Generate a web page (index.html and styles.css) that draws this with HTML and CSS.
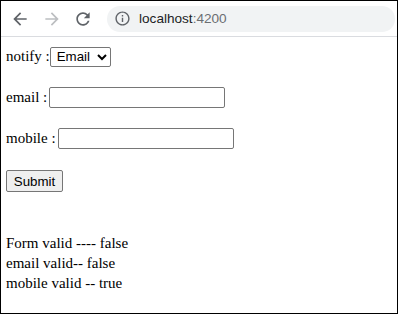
FILE: index.html
```html
<!DOCTYPE html>
<html>
<head>
<meta charset="utf-8">
<link rel="stylesheet" href="styles.css">
</head>
<body>
<div class="frame">
  <div class="chrome">
    <svg class="nav back" viewBox="0 0 24 24"><path d="M20 11H7.83l5.59-5.59L12 4l-8 8 8 8 1.41-1.41L7.83 13H20v-2z"/></svg>
    <svg class="nav fwd" viewBox="0 0 24 24"><path d="M12 4l-1.41 1.41L16.17 11H4v2h12.17l-5.58 5.59L12 20l8-8z"/></svg>
    <svg class="nav reload" viewBox="0 0 24 24"><path d="M17.65 6.35C16.2 4.9 14.21 4 12 4c-4.42 0-7.99 3.58-7.99 8s3.57 8 7.99 8c3.730 0 6.84-2.55 7.73-6h-2.08c-.82 2.33-3.04 4-5.650 4-3.31 0-6-2.69-6-6s2.69-6 6-6c1.66 0 3.14.69 4.22 1.78L13 11h7V4l-2.35 2.35z"/></svg>
    <div class="omnibox">
      <svg class="info" viewBox="0 0 24 24"><path d="M11 7h2v2h-2zm0 4h2v6h-2zm1-9C6.48 2 2 6.48 2 12s4.48 10 10 10 10-4.48 10-10S17.52 2 12 2zm0 18c-4.41 0-8-3.590-8-8s3.59-8 8-8 8 3.59 8 8-3.59 8-8 8z"/></svg>
      <span class="host">localhost</span><span class="port">:4200</span>
    </div>
  </div>
  <div class="page">
    <form class="form">
      <div class="row">
        <span class="label">notify :</span>
        <select class="select notify"><option>Email</option><option>Mobile</option></select>
      </div>
      <div class="row">
        <span class="label">email :</span>
        <input class="field email" type="text">
      </div>
      <div class="row">
        <span class="label">mobile :</span>
        <input class="field mobile" type="text">
      </div>
      <div class="row submit-row">
        <button class="btn" type="button">Submit</button>
      </div>
    </form>
    <div class="status">
      <div>Form valid ---- false</div>
      <div>email valid-- false</div>
      <div>mobile valid -- true</div>
    </div>
  </div>
</div>
</body>
</html>
```
FILE: styles.css
```css
html, body {
  margin: 0;
  padding: 0;
  background: #fff;
}
.frame {
  box-sizing: border-box;
  width: 398px;
  height: 314px;
  border: 1px solid #000;
  overflow: hidden;
}
.chrome {
  height: 35px;
  display: flex;
  align-items: center;
  border-bottom: 1px solid #dadce0;
  background: #fff;
}
.nav {
  width: 20px;
  height: 20px;
  fill: #5f6368;
  flex: none;
}
.back { margin-left: 9px; }
.fwd { margin-left: 12px; fill: #bcbec1; }
.reload { margin-left: 11px; }
.omnibox {
  margin-left: 14px;
  margin-right: 2px;
  flex: 1;
  height: 26px;
  border-radius: 13px;
  background: #f1f3f4;
  display: flex;
  align-items: center;
  font-family: "Liberation Sans", Arial, sans-serif;
  font-size: 13.6px;
}
.info {
  width: 17px;
  height: 17px;
  fill: #5f6368;
  margin-left: 7px;
  margin-right: 8px;
}
.host { color: #202124; }
.port { color: #6b6e72; }
.page {
  padding: 9px 0 0 5px;
  font-family: "Liberation Serif", "Times New Roman", serif;
  font-size: 15px;
  color: #000;
}
.form { margin: 0; }
.row {
  display: flex;
  align-items: center;
  height: 21px;
  margin-bottom: 20px;
}
.label { white-space: pre; }
.select {
  margin-left: 0;
  width: 61px;
  height: 20px;
  font-family: "Liberation Sans", Arial, sans-serif;
  font-size: 13.3px;
  border: 1px solid #767676;
  border-radius: 2px;
  background: #fff;
  color: #000;
  padding: 0 0 0 2px;
}
.field {
  box-sizing: border-box;
  margin-left: 2px;
  width: 176px;
  height: 21px;
  border: 1px solid #767676;
  border-radius: 2px;
  padding: 1px 2px;
  font-size: 13.3px;
}
.submit-row {
  margin-top: 21px;
  margin-bottom: 0;
  height: 22px;
}
.btn {
  box-sizing: border-box;
  width: 57px;
  height: 22px;
  background: #efefef;
  border: 1px solid #767676;
  border-radius: 2px;
  font-family: "Liberation Sans", Arial, sans-serif;
  font-size: 13.3px;
  color: #000;
  padding: 0;
}
.status {
  margin-top: 41px;
  line-height: 20px;
}
```
